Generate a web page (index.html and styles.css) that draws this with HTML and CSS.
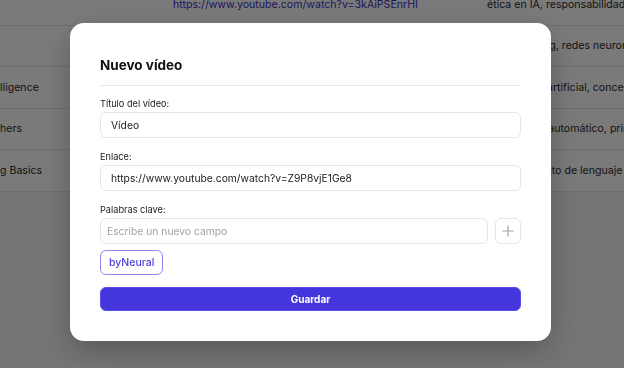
FILE: index.html
```html
<!DOCTYPE html>
<html lang="es">
<head>
    <meta charset="UTF-8">
    <meta name="viewport" content="width=device-width, initial-scale=1.0">
    <title>Vídeos</title>
    <link rel="stylesheet" href="styles.css">
</head>
<body>
    <table class="videos">
        <tr>
            <td class="col-title"></td>
            <td class="col-link"><a href="#">https://www.youtube.com/watch?v=3kAiPSEnrHI</a></td>
            <td class="col-tags">ética en IA, responsabilidad</td>
        </tr>
        <tr>
            <td class="col-title"></td>
            <td class="col-link"></td>
            <td class="col-tags">deep learning, redes neuronales</td>
        </tr>
        <tr>
            <td class="col-title">lligence</td>
            <td class="col-link"></td>
            <td class="col-tags">inteligencia artificial, conceptos</td>
        </tr>
        <tr>
            <td class="col-title">hers</td>
            <td class="col-link"></td>
            <td class="col-tags">aprendizaje automático, principios</td>
        </tr>
        <tr>
            <td class="col-title">g Basics</td>
            <td class="col-link"></td>
            <td class="col-tags">procesamiento de lenguaje</td>
        </tr>
    </table>

    <div class="overlay">
        <div class="modal">
            <h2 class="modal-title">Nuevo vídeo</h2>
            <div class="field">
                <label>Título del vídeo:</label>
                <input type="text" class="input" value="Vídeo">
            </div>
            <div class="field">
                <label>Enlace:</label>
                <input type="text" class="input" value="https://www.youtube.com/watch?v=Z9P8vjE1Ge8">
            </div>
            <div class="field">
                <label>Palabras clave:</label>
                <div class="tag-row">
                    <input type="text" class="input input-small" placeholder="Escribe un nuevo campo">
                    <button type="button" class="add-btn">
                        <svg width="12" height="12" viewBox="0 0 12 12"><path d="M6 0.5v11M0.5 6h11" stroke="#a3a3a3" stroke-width="1.2" fill="none"/></svg>
                    </button>
                </div>
            </div>
            <div class="tags">
                <span class="tag">byNeural</span>
            </div>
            <button type="button" class="save-btn">Guardar</button>
        </div>
    </div>
</body>
</html>
```

FILE: styles.css
```css
body { margin: 0; font-family: Inter, "Noto Sans", sans-serif; background: #f5f5f5; height: 368px; overflow: hidden; }

.videos { border-collapse: collapse; margin-top: -16px; background: #fff; width: 760px; font-size: 10.6px; color: #2b2b2b; white-space: nowrap; }
.videos td { height: 40.5px; padding: 0; border-bottom: 1px solid #e3e3e3; overflow: hidden; }
.col-title { width: 173px; }
.col-link { width: 314px; }
.col-link a { color: #3b30c6; text-decoration: none; }

.overlay { position: fixed; inset: 0; background: rgba(0, 0, 0, 0.52); display: flex; align-items: center; justify-content: center; }
.modal { width: 421px; padding: 32px 30px 30px; background: #fff; border-radius: 14px; box-shadow: 0 10px 30px rgba(0, 0, 0, 0.25); margin-left: -3px; margin-top: -4px; }
.modal-title { margin: 0 0 11px; padding-bottom: 10px; font-size: 13.5px; line-height: 20px; font-weight: 700; color: #111; border-bottom: 1px solid #e8e8e8; }

.field { margin-bottom: 12px; }
.field label { display: block; font-size: 9.2px; line-height: 14px; color: #222; margin-bottom: 1px; }
.input { box-sizing: border-box; width: 100%; height: 26px; padding: 0 10px; border: 1px solid #e6e6e6; border-radius: 6px; font-family: inherit; font-size: 10.3px; color: #222; outline: none; }
.input::placeholder { color: #a3a3a3; }

.tag-row { display: flex; gap: 7px; }
.input-small { flex: 1; padding: 0 6px; }
.add-btn { width: 26px; height: 26px; flex: none; padding: 0; border: 1px solid #e6e6e6; border-radius: 6px; background: #fff; display: flex; align-items: center; justify-content: center; }

.tags { margin-top: -6px; margin-bottom: 12px; }
.tag { display: inline-block; box-sizing: border-box; height: 25px; line-height: 23px; padding: 0 8px; border: 1px solid #8f86ee; border-radius: 6px; color: #4a3fd9; font-size: 10.5px; font-weight: 500; }

.save-btn { display: block; width: 100%; height: 24px; border: 1px solid #5b4ee6; border-radius: 6px; background: #4535dc; color: #fff; font-family: inherit; font-size: 10px; font-weight: 700; }
```
